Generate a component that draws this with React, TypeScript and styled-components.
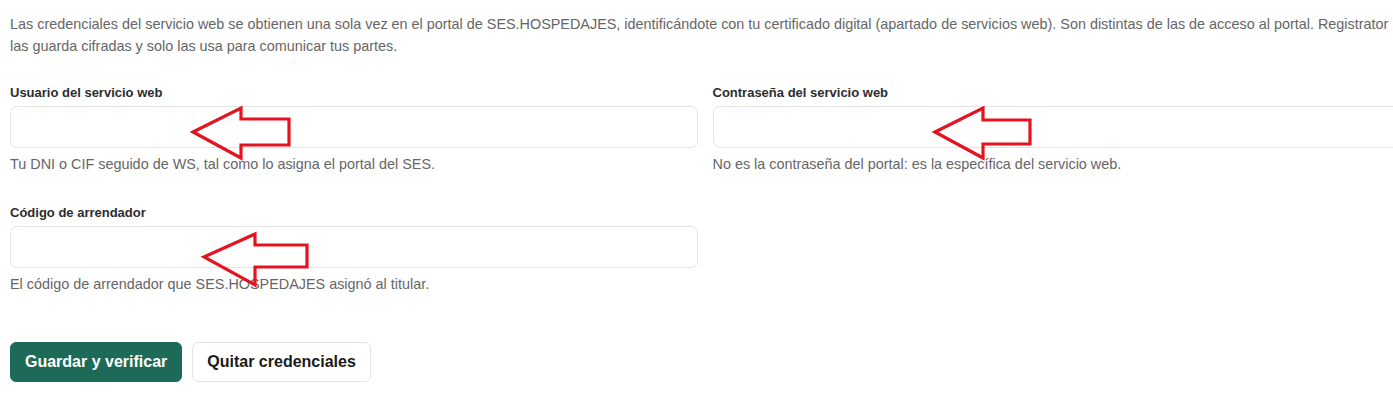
import React from 'react';
import styled, { createGlobalStyle } from 'styled-components';

const GlobalStyle = createGlobalStyle`
  html, body {
    margin: 0;
    padding: 0;
    background: #fff;
    overflow: hidden;
  }
  body {
    font-family: "Liberation Sans", Arial, sans-serif;
  }
`;

const Page = styled.div`
  width: 1390px;
  margin-left: 10px;
  padding-top: 13px;
`;

const Intro = styled.p`
  margin: 0 0 27px;
  font-size: 14.4px;
  line-height: 22px;
  color: #666;
`;

const FieldGrid = styled.div`
  display: grid;
  grid-template-columns: 1fr 1fr;
  column-gap: 15px;
  row-gap: 30px;
`;

const Field = styled.div`
  position: relative;
  display: flex;
  flex-direction: column;
`;

const Label = styled.label`
  font-size: 13px;
  line-height: 17px;
  font-weight: 700;
  color: #2d2d2d;
  margin-bottom: 5px;
`;

const Input = styled.input`
  box-sizing: border-box;
  height: 42px;
  width: 100%;
  border: 1px solid #e4e4e4;
  border-radius: 7px;
  background: #fff;
  padding: 0 12px;
  font-family: inherit;
  font-size: 14px;
  outline: none;
`;

const Hint = styled.div`
  margin-top: 6px;
  font-size: 14.4px;
  line-height: 20px;
  color: #666;
`;

const Actions = styled.div`
  display: flex;
  gap: 10px;
  margin-top: 48px;
`;

const Button = styled.button<{ $primary?: boolean }>`
  box-sizing: border-box;
  height: 40px;
  padding: 0 14px;
  border-radius: 6px;
  border: 1px solid ${(p) => (p.$primary ? '#1d6a58' : '#e4e4e4')};
  background: ${(p) => (p.$primary ? '#1d6a58' : '#fff')};
  color: ${(p) => (p.$primary ? '#fff' : '#1a1a1a')};
  font-family: "Liberation Sans", Arial, sans-serif;
  font-size: 16px;
  font-weight: 700;
  cursor: pointer;
`;

const ArrowMark = styled.svg`
  position: absolute;
  overflow: visible;
  pointer-events: none;
`;

type ArrowProps = { left: number; top: number; w: number; h: number; head: number; s1: number; s2: number; tip: number };

function Arrow({ left, top, w, h, head, s1, s2, tip }: ArrowProps) {
  const pts = `0,${tip} ${head},0 ${head},${s1} ${w},${s1} ${w},${s2} ${head},${s2} ${head},${h}`;
  return (
    <ArrowMark width={w} height={h} viewBox={`0 0 ${w} ${h}`} style={{ left, top }}>
      <polygon points={pts} fill="none" stroke="#e3141f" strokeWidth={3.2} strokeLinejoin="miter" />
    </ArrowMark>
  );
}

export default function App() {
  return (
    <>
      <GlobalStyle />
      <Page>
        <Intro>
          Las credenciales del servicio web se obtienen una sola vez en el portal de SES.HOSPEDAJES, identificándote con tu
          certificado digital (apartado de servicios web). Son distintas de las de acceso al portal. Registrator las guarda
          cifradas y solo las usa para comunicar tus partes.
        </Intro>
        <FieldGrid>
          <Field>
            <Label>Usuario del servicio web</Label>
            <Input type="text" />
            <Hint>Tu DNI o CIF seguido de WS, tal como lo asigna el portal del SES.</Hint>
            <Arrow left={183} top={23.5} w={96} h={50} head={48} s1={11} s2={37} tip={24} />
          </Field>
          <Field>
            <Label>Contraseña del servicio web</Label>
            <Input type="password" />
            <Hint>No es la contraseña del portal: es la específica del servicio web.</Hint>
            <Arrow left={222.5} top={23.5} w={95} h={50} head={48} s1={12} s2={36} tip={24} />
          </Field>
          <Field>
            <Label>Código de arrendador</Label>
            <Input type="text" />
            <Hint>El código de arrendador que SES.HOSPEDAJES asignó al titular.</Hint>
            <Arrow left={194} top={29.5} w={103} h={51} head={51} s1={11} s2={33} tip={23} />
          </Field>
        </FieldGrid>
        <Actions>
          <Button $primary>Guardar y verificar</Button>
          <Button>Quitar credenciales</Button>
        </Actions>
      </Page>
    </>
  );
}
